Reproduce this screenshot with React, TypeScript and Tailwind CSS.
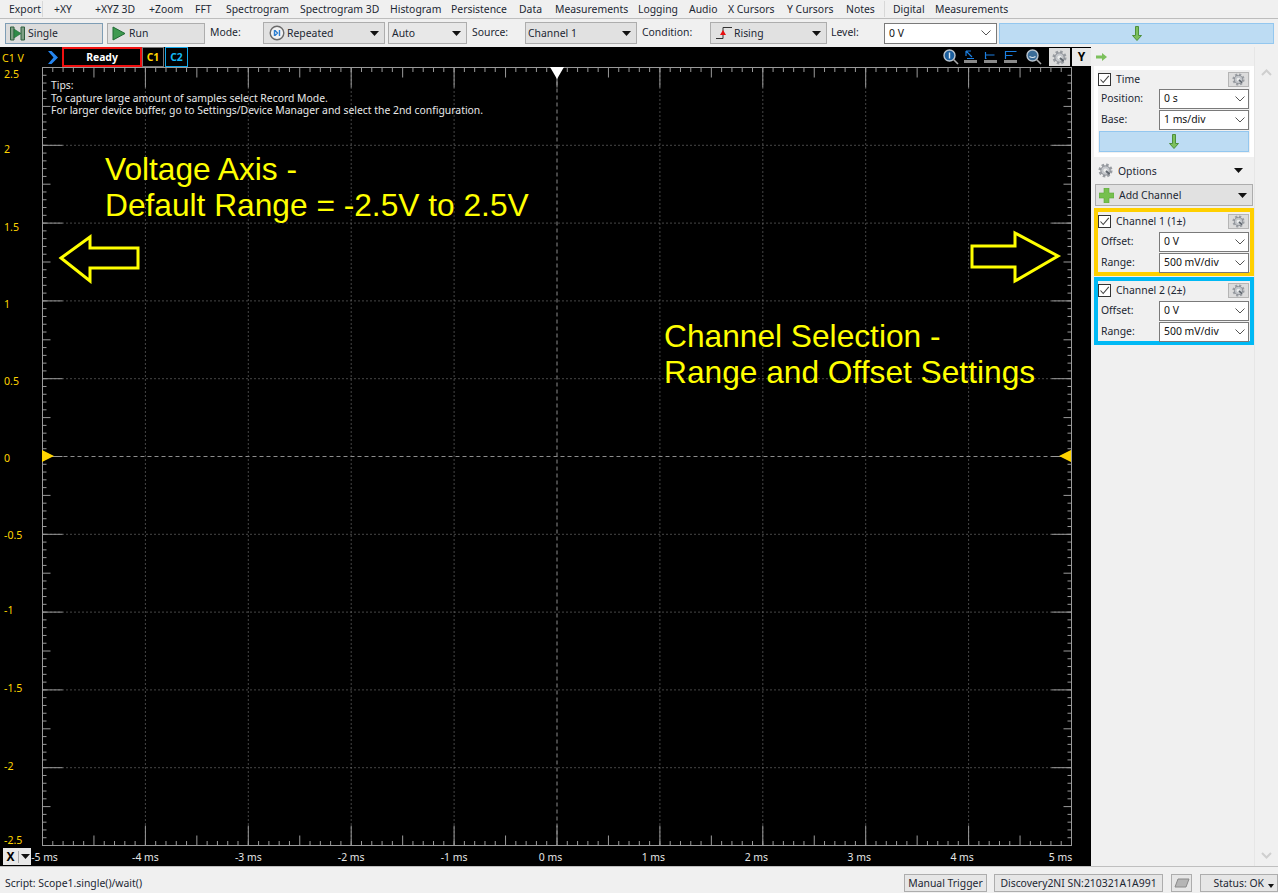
import React from 'react';

const menuItems = [
  { label: 'Export', cls: 'w-[42px] pl-[9px]' },
  { label: '+XY', cls: 'w-[53px] pl-[11px] border-l border-[#d8d8d8]' },
  { label: '+XYZ 3D', cls: 'w-[54px]' },
  { label: '+Zoom', cls: 'w-[46px]' },
  { label: 'FFT', cls: 'w-[31px]' },
  { label: 'Spectrogram', cls: 'w-[74px]' },
  { label: 'Spectrogram 3D', cls: 'w-[90px]' },
  { label: 'Histogram', cls: 'w-[61px]' },
  { label: 'Persistence', cls: 'w-[68px]' },
  { label: 'Data', cls: 'w-[36px]' },
  { label: 'Measurements', cls: 'w-[83px]' },
  { label: 'Logging', cls: 'w-[51px]' },
  { label: 'Audio', cls: 'w-[39px]' },
  { label: 'X Cursors', cls: 'w-[59px]' },
  { label: 'Y Cursors', cls: 'w-[59px]' },
  { label: 'Notes', cls: 'w-[38px]' },
  { label: 'Digital', cls: 'w-[51px] pl-[8px] border-l border-[#d8d8d8] ml-[0px]' },
  { label: 'Measurements', cls: 'w-[90px]' },
];

const X0 = 42.5;
const X1 = 1071.5;
const Y0 = 67.5;
const Y1 = 845.5;
const DX = (X1 - X0) / 10;
const DY = (Y1 - Y0) / 10;

const yLabels = [
  { t: '2.5', y: 78 },
  { t: '2', y: 153 },
  { t: '1.5', y: 231 },
  { t: '1', y: 308 },
  { t: '0.5', y: 385 },
  { t: '0', y: 462 },
  { t: '-0.5', y: 539 },
  { t: '-1', y: 614 },
  { t: '-1.5', y: 692 },
  { t: '-2', y: 770 },
  { t: '-2.5', y: 844 },
];

const xLabels = ['-5 ms', '-4 ms', '-3 ms', '-2 ms', '-1 ms', '0 ms', '1 ms', '2 ms', '3 ms', '4 ms', '5 ms'];

// positive labels sit a bit left of their tick in the scope view
const xLabelPos = (i: number) => {
  if (i === 0) return 44.5;
  if (i === 10) return 1060.5;
  return X0 + i * DX - (i >= 5 ? 6.5 : 0);
};

const Caret = () => (
  <svg width="9" height="5" viewBox="0 0 9 5" className="shrink-0">
    <path d="M0 0h9L4.5 5z" fill="#111" />
  </svg>
);

const Chevron = () => (
  <svg width="10" height="6" viewBox="0 0 10 6" className="shrink-0">
    <path d="M.5.5 5 5 9.5.5" fill="none" stroke="#555" strokeWidth="1" />
  </svg>
);

const GreenDown = () => (
  <svg width="10" height="15" viewBox="0 0 10 15">
    <path d="M3.5.5h3v9h3L5 14.5.5 9.5h3z" fill="#7cc05c" stroke="#4d8f3c" strokeWidth="1" />
  </svg>
);

const Gear = ({ size = 15 }: { size?: number }) => (
  <svg width={size} height={size} viewBox="0 0 16 16">
    <circle cx="8" cy="8" r="6" fill="none" stroke="#9a9ea3" strokeWidth="3" strokeDasharray="2.6 2.1" />
    <circle cx="8" cy="8" r="5" fill="#c4c7cb" stroke="#85898f" strokeWidth="1" />
    <circle cx="8" cy="8" r="2.2" fill="#eceded" />
    <path d="M8.5 8.5 12.5 12" stroke="#5f666e" strokeWidth="2" />
  </svg>
);

const GearButton = () => (
  <div className="w-[21px] h-[15px] bg-[#dcdcdc] border border-[#b5b5b5] flex items-center justify-center">
    <Gear size={13} />
  </div>
);

const Checkbox = () => (
  <div className="w-[13px] h-[13px] border border-[#333] bg-white flex items-center justify-center shrink-0">
    <svg width="11" height="11" viewBox="0 0 11 11">
      <path d="M1.5 5.5 4.2 8.5 9.8 1.8" fill="none" stroke="#444" strokeWidth="1.1" />
    </svg>
  </div>
);

const Field = ({ label, value }: { label: string; value: string }) => (
  <div className="flex items-center h-[21px]">
    <span className="w-[61px] pl-[3px] -mt-[1px]">{label}</span>
    <div className="w-[90px] h-[20px] border border-[#7a7a7a] bg-white flex items-center justify-between pl-[4px] pr-[3px] text-[#111]">
      <span>{value}</span>
      <Chevron />
    </div>
  </div>
);

const ChannelPanel = ({ title, border, v1, v2, l1, l2 }: { title: string; border: string; v1: string; v2: string; l1: string; l2: string }) => (
  <div className={`w-[160px] h-[68px] ${border} bg-[#f0f0f0]`}>
    <div className="flex items-center h-[19px] pr-[1px]">
      <Checkbox />
      <span className="ml-[5px] flex-1">{title}</span>
      <GearButton />
    </div>
    <Field label={l1} value={v1} />
    <Field label={l2} value={v2} />
  </div>
);

const ToolSelect = ({ cls, icon, label, bg }: { cls: string; icon?: React.ReactNode; label: string; bg: string }) => (
  <div className={`h-[22px] border border-[#adadad] flex items-center pr-[5px] ${cls} ${bg}`}>
    {icon}
    <span className="flex-1 pl-[2px]">{label}</span>
    <Caret />
  </div>
);

const MiniZoom = ({ symbol }: { symbol: string }) => (
  <svg width="16" height="16" viewBox="0 0 16 16">
    <circle cx="6.5" cy="6.5" r="5.5" fill={symbol === 'in' ? '#1c5f9e' : '#3a6c98'} stroke="#b9c4cf" strokeWidth="1.4" />
    {symbol === 'in' ? (
      <path d="M6.5 3.5v6" stroke="#dfe9f2" strokeWidth="1.4" />
    ) : (
      <path d="M3.5 7.5q3 2 6 0" fill="none" stroke="#dfe9f2" strokeWidth="1.2" />
    )}
    <path d="M10.5 10.5 15 15" stroke="#a9a9a9" strokeWidth="1.6" />
  </svg>
);

const AxisIcon = ({ d }: { d: string }) => (
  <svg width="13" height="15" viewBox="0 0 13 15">
    <path d={d} fill="none" stroke="#1c7fe0" strokeWidth="1.2" />
    <rect x="0" y="10" width="13" height="3" fill="#8a8a8a" />
  </svg>
);

function Chart() {
  const minorX = Array.from({ length: 101 }, (_, i) => X0 + (i * DX) / 10);
  const minorY = Array.from({ length: 101 }, (_, i) => Y0 + (i * DY) / 10);
  return (
    <svg width="1091" height="799" viewBox="0 67 1091 799" className="block" style={{ fontFamily: '"Noto Sans", sans-serif' }}>
      {Array.from({ length: 9 }, (_, i) => i + 1).map((i) => (
        <g key={i}>
          <line x1={X0 + i * DX} x2={X0 + i * DX} y1={Y0} y2={Y1} stroke="#8c8c8c" strokeDasharray={i === 5 ? '4 3' : '1 3'} />
          <line x1={X0} x2={X1} y1={Y0 + i * DY} y2={Y0 + i * DY} stroke="#8c8c8c" strokeDasharray={i === 5 ? '4 3' : '1 3'} />
          <line x1={X0 + i * DX} x2={X0 + i * DX} y1={Y0} y2={Y0 + 20} stroke="#9a9a9a" />
          <line x1={X0 + i * DX} x2={X0 + i * DX} y1={Y1} y2={Y1 - 20} stroke="#9a9a9a" />
          <line y1={Y0 + i * DY} y2={Y0 + i * DY} x1={X0} x2={X0 + 20} stroke="#9a9a9a" />
          <line y1={Y0 + i * DY} y2={Y0 + i * DY} x1={X1} x2={X1 - 20} stroke="#9a9a9a" />
        </g>
      ))}
      {minorX.map((x, i) => {
        const len = i % 10 === 5 ? 10 : 4.5;
        return (
          <g key={i} stroke="#9a9a9a">
            <line x1={x} x2={x} y1={Y0} y2={Y0 + len} />
            <line x1={x} x2={x} y1={Y1} y2={Y1 - len} />
          </g>
        );
      })}
      {minorY.map((y, i) => {
        const len = i % 10 === 5 ? 8 : 4;
        return (
          <g key={i} stroke="#9a9a9a">
            <line y1={y} y2={y} x1={X0} x2={X0 + len} />
            <line y1={y} y2={y} x1={X1} x2={X1 - len} />
          </g>
        );
      })}
      <rect x={X0} y={Y0} width={X1 - X0} height={Y1 - Y0} fill="none" stroke="#9a9a9a" />
      <path d="M550 67h14l-7 12z" fill="#fff" />
      <path d="M42 450l12 6-12 6z" fill="#ffd400" />
      <path d="M1071 450l-12 6 12 6z" fill="#ffd400" />
      {yLabels.map((l) => (
        <text key={l.t} x="4" y={l.y} fontSize="10.6" fill="#ffd400">{l.t}</text>
      ))}
      {xLabels.map((t, i) => (
        <text key={t} x={xLabelPos(i)} y="861" fontSize="10.4" fill="#e6e6e6" textAnchor="middle">
          {t}
        </text>
      ))}
    </svg>
  );
}

export default function App() {
  return (
    <div className="w-[1278px] h-[893px] overflow-hidden flex flex-col bg-[#f0f0f0] text-[10.4px] leading-none text-[#1c2733] font-['Noto_Sans',sans-serif]">
      {/* menu */}
      <div className="h-[19px] flex items-center border-b border-[#bdbdbd] shrink-0">
        {menuItems.map((m, i) => (
          <div key={i} className={`h-[16px] flex items-center whitespace-nowrap ${m.cls}`}>{m.label}</div>
        ))}
      </div>

      {/* toolbar */}
      <div className="h-[28px] flex items-center shrink-0">
        <div className="ml-[5px] w-[98px] h-[21px] bg-[#dcdcdc] border border-[#7e9db5] flex items-center pl-[4px] gap-[3px] mt-[1px]">
          <svg width="15" height="15" viewBox="0 0 15 15">
            <path d="M.5 1h3.5v13H.5zM11 1h3.5v13H11z" fill="#7f9f85" stroke="#2f5f3f" />
            <path d="M4 3 11 7.5 4 12z" fill="#2e8b48" stroke="#1f6a33" strokeWidth="0.6" />
          </svg>
          <span className="-mt-[1px]">Single</span>
        </div>
        <div className="ml-[4px] w-[98px] h-[21px] bg-[#e1e1e1] border border-[#adadad] flex items-center pl-[4px] gap-[3px] mt-[1px]">
          <svg width="14" height="15" viewBox="0 0 14 15">
            <path d="M1 1v13l12-6.5z" fill="#3f9a50" stroke="#1f6a33" />
          </svg>
          <span className="-mt-[1px]">Run</span>
        </div>
        <span className="ml-[5px] w-[53px] -mt-[2px]">Mode:</span>
        <ToolSelect
          cls="w-[122px] pl-[5px]"
          bg="bg-[#e1e1e1]"
          label="Repeated"
          icon={
            <svg width="16" height="16" viewBox="0 0 16 16">
              <circle cx="8" cy="8" r="6.8" fill="#f2f2f2" stroke="#6a6a6a" strokeWidth="1.4" />
              <path d="M5.5 5v6M10.5 5v6M6 5.5 8.5 8 6 10.5" fill="none" stroke="#2f7fd0" strokeWidth="1.4" />
            </svg>
          }
        />
        <ToolSelect cls="ml-[3px] w-[79px] pl-[1px]" bg="bg-[#e8e8e8]" label="Auto" />
        <span className="ml-[5px] w-[53px] -mt-[2px]">Source:</span>
        <ToolSelect cls="w-[112px]" bg="bg-[#e1e1e1]" label="Channel 1" />
        <span className="ml-[5px] w-[68px] -mt-[2px]">Condition:</span>
        <ToolSelect
          cls="w-[117px] pl-[5px]"
          bg="bg-[#e1e1e1]"
          label="Rising"
          icon={
            <svg width="16" height="14" viewBox="0 0 16 14">
              <path d="M0 12.5h7V1.5h9" fill="none" stroke="#333" strokeWidth="1" />
              <path d="M7 4 10 9H4z" fill="#e81010" />
            </svg>
          }
        />
        <span className="ml-[4px] w-[53px] -mt-[2px]">Level:</span>
        <div className="w-[113px] h-[21px] border border-[#7a7a7a] bg-white flex items-center justify-between pl-[4px] pr-[5px] text-[#111]">
          <span>0 V</span>
          <Chevron />
        </div>
        <div className="ml-[2px] w-[275px] h-[21px] bg-[#bddcf3] border border-[#93c7ef] flex items-center justify-center">
          <GreenDown />
        </div>
      </div>

      {/* main */}
      <div className="h-[820px] flex shrink-0 border-b border-[#bfbfbf]">
        <div className="w-[1091px] bg-black relative pl-[2px]">
          <div className="h-[20px] flex items-stretch -ml-[2px]">
            <span className="w-[48px] pl-[2px] pt-[6px] text-[#ffd400] text-[10.6px]">C1 V</span>
            <div className="w-[14px] flex items-center">
              <svg width="10" height="13" viewBox="0 0 10 13">
                <path d="M0 0h3.5L10 6.5 3.5 13H0l5.5-6.5z" fill="#2585ef" />
              </svg>
            </div>
            <div className="w-[80px] h-[20px] border-2 border-[#f01010] text-white font-bold flex items-center justify-center">Ready</div>
            <div className="w-[22px] h-[20px] border border-[#777] text-[#ffd400] font-bold flex items-center justify-center">C1</div>
            <div className="ml-[1px] w-[23px] h-[20px] border border-[#13a8ea] text-[#13b7f5] font-bold flex items-center justify-center">C2</div>
            <div className="flex-1 flex items-center justify-end">
              <MiniZoom symbol="in" />
              <div className="ml-[5px]"><AxisIcon d="M2 1l6 6M2 1v5M2 1h5M3 8.5h7" /></div>
              <div className="ml-[7px]"><AxisIcon d="M1.5 2v7M1.5 5h9M1.5 8.5h1" /></div>
              <div className="ml-[7px]"><AxisIcon d="M1.5 1v8M1.5 1.500h11M1.5 5.500h7" /></div>
              <div className="ml-[9px]"><MiniZoom symbol="out" /></div>
              <div className="w-[21px] h-[18px] bg-[#dcdcdc] flex items-center justify-center ml-[7px]"><Gear size={15} /></div>
              <div className="w-[19px] h-[18px] bg-[#e8e8e8] flex items-center justify-center text-black font-bold text-[12px] ml-[2px]">Y</div>
            </div>
          </div>
          <div className="-ml-[2px]">
            <Chart />
          </div>

          {/* tips */}
          <div className="absolute left-[51px] top-[32px] text-[#e8e8e8] leading-[12.5px]">
            <div>Tips:</div>
            <div>To capture large amount of samples select Record Mode.</div>
            <div>For larger device buffer, go to Settings/Device Manager and select the 2nd configuration.</div>
          </div>

          {/* annotations */}
          <div className="absolute left-[105px] top-[104px] text-[#ffff00] text-[31.7px] leading-[36px] font-['Liberation_Sans',sans-serif] whitespace-nowrap">
            <div>Voltage Axis -</div>
            <div>Default Range = -2.5V to 2.5V</div>
          </div>
          <div className="absolute left-[664px] top-[271px] text-[#ffff00] text-[31.7px] leading-[36px] font-['Liberation_Sans',sans-serif] whitespace-nowrap">
            <div>Channel Selection -</div>
            <div>Range and Offset Settings</div>
          </div>
          <svg className="absolute left-[58px] top-[187px]" width="84" height="50" viewBox="0 0 84 50">
            <path d="M3 24 32 3v11h48v20H32v13z" fill="none" stroke="#ffff00" strokeWidth="3" />
          </svg>
          <svg className="absolute left-[968px] top-[183px]" width="94" height="54" viewBox="0 0 94 54">
            <path d="M90 26 47 3v13H4v21h43v14z" fill="none" stroke="#ffff00" strokeWidth="3" />
          </svg>

          {/* x axis selector */}
          <div className="absolute left-[3px] top-[801px] w-[28px] h-[17px] bg-[#e8e8e8] flex items-center text-black">
            <span className="w-[16px] text-center font-bold text-[12px] border-r border-[#aaa]">X</span>
            <div className="pl-[2px]"><Caret /></div>
          </div>
        </div>

        {/* side panel */}
        <div className="w-[187px] flex">
          <div className="w-[163px] pl-[3px]">
            <div className="h-[19px] flex items-center pl-[2px]">
              <svg width="11" height="8" viewBox="0 0 11 8">
                <path d="M0 2.5h6V0l5 4-5 4V5.5H0z" fill="#7cc05c" />
              </svg>
            </div>
            <div className="w-[160px] h-[91px] border-4 border-white bg-[#f0f0f0]">
              <div className="flex items-center h-[18px] pr-[1px]">
                <Checkbox />
                <span className="ml-[5px] flex-1">Time</span>
                <GearButton />
              </div>
              <Field label="Position:" value="0 s" />
              <Field label="Base:" value="1 ms/div" />
              <div className="w-[150px] h-[21px] mt-[1px] ml-[1px] bg-[#bddcf3] border border-[#93c7ef] flex items-center justify-center">
                <GreenDown />
              </div>
            </div>
            <div className="h-[27px] flex items-center pl-[4px] pr-[11px] gap-[5px]">
              <Gear size={15} />
              <span className="flex-1 mt-[1px]">Options</span>
              <Caret />
            </div>
            <div className="w-[158px] h-[22px] bg-[#e1e1e1] border border-[#adadad] flex items-center pl-[3px] pr-[5px] gap-[5px] ml-[1px]">
              <svg width="15" height="15" viewBox="0 0 15 15">
                <path d="M5 0h5v5h5v5h-5v5H5v-5H0V5h5z" fill="#76c04e" stroke="#5aa63a" strokeWidth="0.6" />
              </svg>
              <span className="flex-1 mt-[1px]">Add Channel</span>
              <Caret />
            </div>
            <div className="h-[2px]" />
            <ChannelPanel title="Channel 1 (1±)" border="border-4 border-[#ffd000]" l1="Offset:" v1="0 V" l2="Range:" v2="500 mV/div" />
            <div className="h-[1px]" />
            <ChannelPanel title="Channel 2 (2±)" border="border-4 border-[#00b9f5]" l1="Offset:" v1="0 V" l2="Range:" v2="500 mV/div" />
          </div>
          <div className="flex-1 border-l border-[#e6e6e6] flex flex-col items-center justify-between pt-[22px] pb-[7px]">
            <svg width="11" height="7" viewBox="0 0 11 7">
              <path d="M1 6 5.5 1.5 10 6" fill="none" stroke="#cfcfcf" strokeWidth="2" />
            </svg>
            <svg width="11" height="7" viewBox="0 0 11 7">
              <path d="M1 1l4.5 4.5L10 1" fill="none" stroke="#cfcfcf" strokeWidth="2" />
            </svg>
          </div>
        </div>
      </div>

      {/* status bar */}
      <div className="flex-1 flex items-center pt-[6px]">
        <span className="pl-[5px] w-[904px]">Script: Scope1.single()/wait()</span>
        <div className="w-[83px] h-[18px] border border-[#adadad] bg-[#e6e6e6] flex items-center justify-center">Manual Trigger</div>
        <div className="ml-[7px] w-[169px] h-[18px] border border-[#adadad] bg-[#e6e6e6] flex items-center justify-center">Discovery2NI SN:210321A1A991</div>
        <div className="ml-[8px] w-[21px] h-[18px] border border-[#adadad] bg-[#e6e6e6] flex items-center justify-center">
          <svg width="16" height="10" viewBox="0 0 16 10">
            <path d="M4 1h11l-3 8H1z" fill="#b5b5b5" stroke="#8a8a8a" />
          </svg>
        </div>
        <div className="ml-[8px] w-[78px] h-[18px] border border-[#adadad] bg-[#e6e6e6] flex items-center justify-end pr-[3px] gap-[4px]">
          <span>Status: OK</span>
          <svg width="6" height="4" viewBox="0 0 6 4" className="mt-[6px]"><path d="M0 0h6L3 4z" fill="#111" /></svg>
        </div>
      </div>
    </div>
  );
}
